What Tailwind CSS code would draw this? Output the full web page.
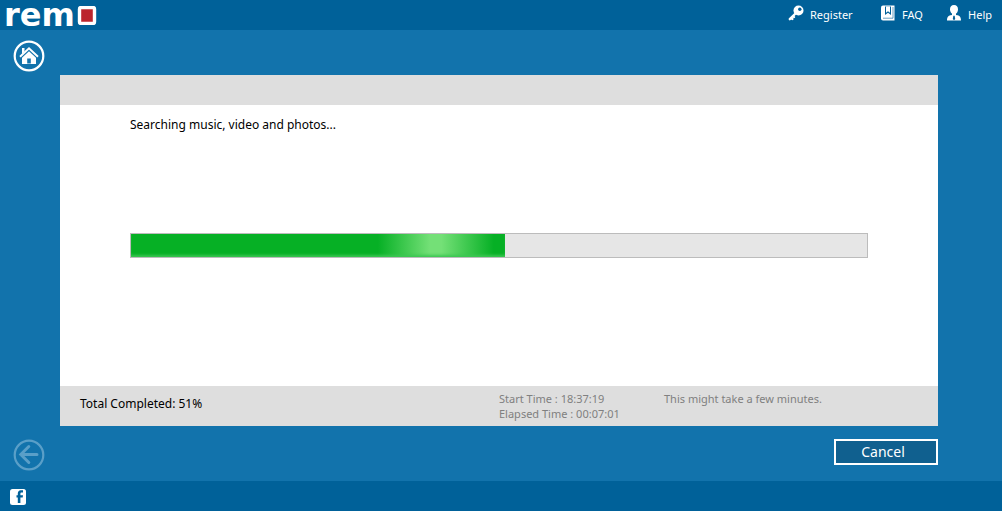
<!DOCTYPE html>
<html lang="en">
<head>
<meta charset="utf-8">
<meta name="viewport" content="width=device-width, initial-scale=1">
<title>Remo</title>
<script src="https://cdn.jsdelivr.net/npm/@tailwindcss/browser@4"></script>
</head>
<body class="flex min-h-screen flex-col bg-[#1273ac] font-['Noto_Sans','Open_Sans',sans-serif] text-[11px] text-black">
<header class="flex h-[30px] items-center justify-between bg-[#006199] pr-2.5 pl-1">
  <a href="#" aria-label="remo" class="flex items-center gap-0.5 text-white">
    <span class="font-['DejaVu_Sans'] text-[32px] leading-[30px] font-bold">rem</span>
    <svg class="h-[19px] w-5" viewBox="0 0 20 19"><rect x="2.500" y="1.500" width="15" height="16" rx="1.500" fill="#bb252d" stroke="#fff" stroke-width="3.400"/></svg>
  </a>
  <nav class="flex items-center text-[11px] leading-4 text-white">
    <a href="#" class="flex w-[92px] items-center gap-1.5">
      <svg class="mb-1 size-4" viewBox="0 0 16 16" fill="none"><circle cx="10.500" cy="5.500" r="5" fill="#fff"/><circle cx="11.800" cy="4.200" r="1.700" fill="#006199"/><path d="M7.500 8.500 1.800 14.200M3.200 12.800l1.200 1.200M5 11l1 1" stroke="#fff" stroke-width="2.400" stroke-linecap="round"/></svg>
      Register
    </a>
    <a href="#" class="flex w-[66px] items-center gap-1.5">
      <svg class="mb-1 size-4" viewBox="0 0 16 16"><path d="M3 .5h11.500v15H3Q1 15.500 1 13.500v-11Q1 .5 3 .5Z" fill="#fff"/><path d="M5 1.500h6v8.500L8 7.800 5 10Z" fill="#006199"/><path d="M6 1.500h4v6.300L8 6.300 6 7.800Z" fill="#fff"/><path d="M3 13.200h10V2" fill="none" stroke="#006199" stroke-width=".6"/></svg>
      FAQ
    </a>
    <a href="#" class="flex items-center gap-1.5">
      <svg class="mb-1 size-4" viewBox="0 0 16 16" fill="#fff"><path d="M8 0c2.700 0 4 1.800 4 4.300C12 7.200 10 9.500 8 9.500S4 7.200 4 4.300C4 1.800 5.300 0 8 0Z"/><path d="M6 8h4v3H6ZM1 15.500c0-3.700 1.500-5 4.500-5.500L8 11.300l2.500-1.300c3 .5 4.500 1.800 4.500 5.500Z"/><path d="m7.300 11 .7-.5.700.5.500 3L8 15.200 6.800 14Z" fill="#006199"/></svg>
      Help
    </a>
  </nav>
</header>

<main class="flex flex-1">
  <div class="flex w-[60px] shrink-0 flex-col justify-between pt-2.5 pb-2.5 pl-[13px]">
    <button type="button" aria-label="Home" class="size-8">
      <svg class="size-8" viewBox="0 0 32 32" fill="none"><circle cx="16" cy="16" r="14.300" stroke="#fff" stroke-width="2.200"/><path d="m7 16.800 9-8.500 9 8.500" stroke="#fff" stroke-width="2"/><path d="M9 8h2.500v3.500L9 14ZM16 11.200l7 6.600V24H9v-6.200Z" fill="#fff"/><path d="M14.200 18.500h3.600V23.500h-3.600Z" fill="#1273ac"/></svg>
    </button>
    <button type="button" aria-label="Back" disabled class="size-8">
      <svg class="size-8" viewBox="0 0 32 32" fill="none" stroke="#5a9fc8"><circle cx="16" cy="16" r="14.300" stroke-width="2.200"/><path d="M24 15.500H8M15.800 7.500l-8 8 8 8" stroke-width="3" stroke-linecap="round"/></svg>
    </button>
  </div>

  <div class="mr-16 flex min-w-0 flex-1 flex-col pt-[45px] pb-4">
    <section class="flex flex-1 flex-col bg-white">
      <div class="h-[30px] bg-[#dedede]"></div>
      <div class="flex-1 px-[70px] pt-2.5">
        <p class="text-xs leading-5">Searching music, video and photos...</p>
        <div role="progressbar" aria-label="Search progress" aria-valuenow="51" aria-valuemin="0" aria-valuemax="100" class="mt-[98px] h-[25px] border border-[#bcbcbc] bg-[#e6e6e6]">
          <div class="h-full bg-[#06b025] bg-[linear-gradient(to_right,transparent_66%,#74e077_80%,#74e077_83%,transparent_97%)] shadow-[inset_0_-3px_3px_-1px_#3cc752]" style="width:50.8%"></div>
        </div>
      </div>
      <div class="flex h-10 items-start bg-[#dedede] pt-[5px] pl-5 text-[#808080]">
        <p class="w-[419px] pt-[5px] text-xs leading-4 text-black">Total Completed: 51%</p>
        <p class="w-[165px] leading-[15px]">Start Time : 18:37:19<br>Elapsed Time : 00:07:01</p>
        <p class="leading-[15px]">This might take a few minutes.</p>
      </div>
    </section>
    <button type="button" class="mt-[13px] h-[26px] w-[104px] self-end border-2 border-white bg-[#10608f] pr-1.5 text-sm leading-5 text-white">Cancel</button>
  </div>
</main>

<footer class="flex h-[30px] items-center bg-[#006199] pl-2.5">
  <a href="#" aria-label="Facebook" class="mt-0.5 size-4">
    <svg class="size-4" viewBox="0 0 16 16"><rect width="16" height="16" rx="2.500" fill="#fff"/><path d="M13 3.500h-1.600q-1 0-1 1v1.800H13l-.3 2.200h-2.300V14H7.800V8.500H6.500V6.300h1.300V4.500q0-3 3-3.200H13Z" fill="#006199"/></svg>
  </a>
</footer>
</body>
</html>
